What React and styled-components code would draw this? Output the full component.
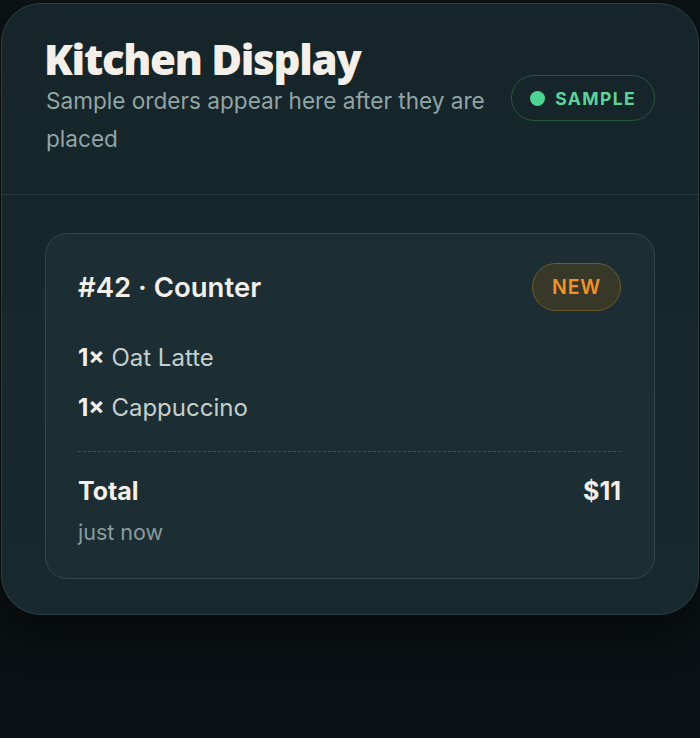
import React from 'react';
import styled, { createGlobalStyle } from 'styled-components';

const GlobalStyle = createGlobalStyle`
  html, body {
    margin: 0;
    min-height: 100%;
    background: linear-gradient(180deg, #0c1315 0%, #0a0f11 60%, #0b1215 100%);
    font-family: 'Inter', 'Liberation Sans', sans-serif;
  }
  body {
    min-height: 738px;
  }
`;

const StyledPanel = styled.section`
  margin: 3px 1px 0;
  border: 1px solid #2c3f43;
  border-radius: 40px;
  background: linear-gradient(180deg, #15252a 0%, #172a2f 100%);
  box-shadow: 0 20px 40px rgba(0, 0, 0, 0.45);
  overflow: hidden;
`;

const StyledHeader = styled.header`
  display: flex;
  justify-content: space-between;
  align-items: flex-start;
  padding: 32px 43px 36px 42px;
  border-bottom: 1px solid #2a3c40;
`;

const StyledTitleBlock = styled.div`
  display: flex;
  flex-direction: column;
`;

const StyledTitle = styled.h1`
  margin: 0;
  color: #f4efe8;
  font-family: 'Open Sans', 'Liberation Sans', sans-serif;
  font-weight: 800;
  font-size: 42px;
  line-height: 46px;
  letter-spacing: -1.3px;
`;

const StyledSubtitle = styled.p`
  margin: 0 0 0 2px;
  max-width: 450px;
  color: #93a4a4;
  font-size: 22.6px;
  line-height: 38px;
`;

const StyledSampleBadge = styled.div`
  display: flex;
  align-items: center;
  gap: 10px;
  margin-top: 39px;
  height: 44px;
  padding: 0 18px;
  border: 1.5px solid #275741;
  border-radius: 999px;
  color: #5fd29a;
  font-size: 17.5px;
  font-weight: 700;
  letter-spacing: 1.4px;
`;

const StyledDot = styled.span`
  width: 15px;
  height: 15px;
  border-radius: 50%;
  background: #4fd393;
`;

const StyledBody = styled.div`
  padding: 38px 43px 35px;
`;

const StyledCard = styled.article`
  border: 1px solid #32474c;
  border-radius: 22px;
  background: #1c2e33;
  padding: 29px 33px 27px 32px;
`;

const StyledCardTop = styled.div`
  display: flex;
  justify-content: space-between;
  align-items: center;
  margin-bottom: 22px;
`;

const StyledOrderName = styled.h2`
  margin: 0;
  color: #f4efe8;
  font-size: 27.5px;
  font-weight: 600;
`;

const StyledStatus = styled.span`
  display: inline-flex;
  align-items: center;
  height: 46px;
  padding: 0 19px;
  border: 1.5px solid #6d5b2b;
  border-radius: 999px;
  background: #383828;
  color: #f0912a;
  font-size: 19.5px;
  font-weight: 600;
  letter-spacing: 0.8px;
`;

const StyledItem = styled.div`
  color: #c4d0ce;
  font-size: 24px;
  line-height: 50px;

  b {
    color: #f4efe8;
    font-weight: 700;
  }
`;

const StyledDivider = styled.hr`
  margin: 18px 0 19px;
  border: 0;
  border-top: 1.5px dashed #3b5055;
`;

const StyledTotalRow = styled.div`
  display: flex;
  justify-content: space-between;
  align-items: center;
  color: #f4efe8;
  font-size: 25px;
  font-weight: 700;
  line-height: 40px;
`;

const StyledTime = styled.div`
  margin-top: 2px;
  color: #8a9b9b;
  font-size: 21.5px;
  line-height: 38px;
`;

const items = [
  { qty: 1, name: 'Oat Latte' },
  { qty: 1, name: 'Cappuccino' },
];

const App = () => (
  <>
    <GlobalStyle />
    <StyledPanel>
      <StyledHeader>
        <StyledTitleBlock>
          <StyledTitle>Kitchen Display</StyledTitle>
          <StyledSubtitle>Sample orders appear here after they are placed</StyledSubtitle>
        </StyledTitleBlock>
        <StyledSampleBadge>
          <StyledDot />
          SAMPLE
        </StyledSampleBadge>
      </StyledHeader>
      <StyledBody>
        <StyledCard>
          <StyledCardTop>
            <StyledOrderName>#42 · Counter</StyledOrderName>
            <StyledStatus>NEW</StyledStatus>
          </StyledCardTop>
          {items.map(item => (
            <StyledItem key={item.name}>
              <b>{item.qty}×</b> {item.name}
            </StyledItem>
          ))}
          <StyledDivider />
          <StyledTotalRow>
            <span>Total</span>
            <span>$11</span>
          </StyledTotalRow>
          <StyledTime>just now</StyledTime>
        </StyledCard>
      </StyledBody>
    </StyledPanel>
  </>
);

export default App;
